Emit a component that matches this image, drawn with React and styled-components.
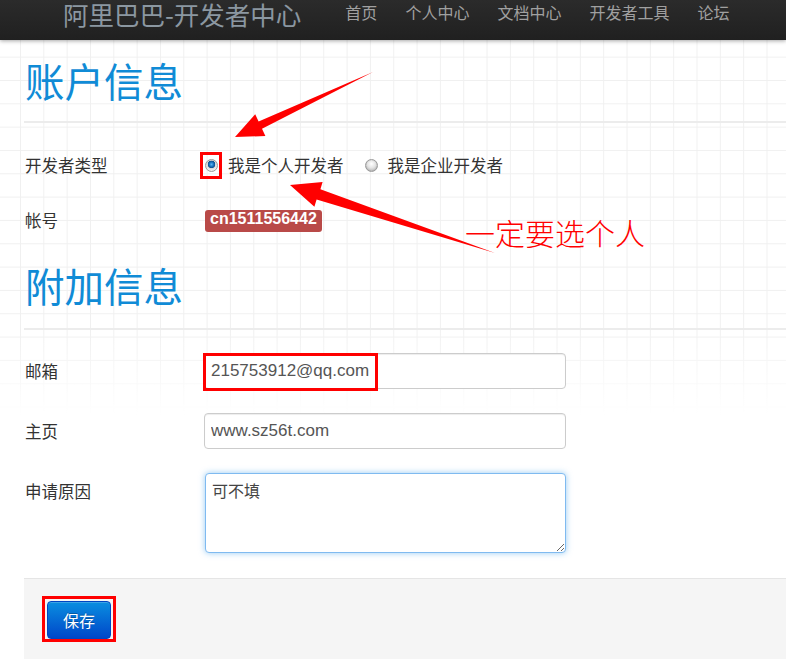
import React from 'react'
import styled, {createGlobalStyle} from 'styled-components'

const GlobalStyle = createGlobalStyle`
  html, body { margin: 0; padding: 0; background: #fff; }
  body { overflow: hidden; font-family: "Noto Sans CJK SC", "Liberation Sans", sans-serif; }
`

const navItems = ['首页', '个人中心', '文档中心', '开发者工具', '论坛']

export default function App() {
  return (
    <Page>
      <GlobalStyle/>
      <Header>
        <Brand>阿里巴巴-开发者中心</Brand>
        <Nav>
          {navItems.map(n => <NavItem key={n}>{n}</NavItem>)}
        </Nav>
      </Header>

      <Main>
        <SectionTitle top={20}>账户信息</SectionTitle>
        <Fields top={24} gap={19}>
          <Row>
            <Label>开发者类型</Label>
            <Radio checked>我是个人开发者</Radio>
            <Radio>我是企业开发者</Radio>
          </Row>
          <Row>
            <Label>帐号</Label>
            <Badge>cn1511556442</Badge>
          </Row>
        </Fields>

        <SectionTitle top={27} bottom={23}>附加信息</SectionTitle>
        <Fields top={23} gap={24}>
          <Row>
            <Label>邮箱</Label>
            <Input defaultValue='215753912@qq.com'/>
          </Row>
          <Row>
            <Label>主页</Label>
            <Input defaultValue='www.sz56t.com'/>
          </Row>
          <Row align='flex-start'>
            <Label pad={6}>申请原因</Label>
            <TextArea defaultValue='可不填'/>
          </Row>
        </Fields>

        <Actions>
          <PrimaryButton>保存</PrimaryButton>
        </Actions>
      </Main>

      <Annotations>
        <Marker x={200} y={152} w={22} h={27}/>
        <Marker x={203} y={353} w={175} h={38}/>
        <Marker x={42} y={596} w={74} h={46}/>
        <Arrows width='786' height='659' viewBox='0 0 786 659'>
          <polygon fill='#ff0000'
            points='373,72 262,128.7 265.4,136 235,137 255.2,114.2 258.6,121.5'/>
          <polygon fill='#ff0000'
            points='495,253 316.6,199.6 314.4,206.7 290,185 322.6,182.1 320.4,189.2'/>
        </Arrows>
        <Note>一定要选个人</Note>
      </Annotations>
    </Page>
  )
}

let Radio = ({checked, children}) => (
  <RadioLabel>
    <RadioDot checked={checked}/>
    {children}
  </RadioLabel>
)


let Page = styled.div`
  position: relative;
  width: 786px;
  height: 659px;
  overflow: hidden;
  background-color: #fff;
  background-image:
    linear-gradient(to bottom, rgba(255,255,255,0) 330px, #fff 415px),
    linear-gradient(#f0f0f0 1px, transparent 1px),
    linear-gradient(90deg, #f0f0f0 1px, transparent 1px);
  background-size: 100% 100%, 23.33px 23.33px, 23.33px 23.33px;
  background-position: 0 0, 0 10px, 20px 0;
`

let Header = styled.div`
  height: 40px;
  display: flex;
  align-items: flex-start;
  padding-left: 63px;
  background: linear-gradient(#2b2b2b, #202020);
  box-shadow: 0 1px 4px rgba(0,0,0,.35);
`

let Brand = styled.div`
  font-size: 25.5px;
  line-height: 28px;
  color: #8b97a1;
  margin-right: 30px;
  white-space: nowrap;
`

let Nav = styled.div`
  display: flex;
`

let NavItem = styled.div`
  padding: 0 14px;
  font-size: 16px;
  line-height: 25px;
  color: #a0a0a0;
  white-space: nowrap;
`

let Main = styled.div`
  padding-left: 24px;
`

let SectionTitle = styled.h1`
  margin: ${p => p.top}px 0 0;
  padding: 0 0 ${p => p.bottom || 21}px 1px;
  font-size: 39.5px;
  line-height: 40px;
  font-weight: 400;
  color: #108bd6;
  border-bottom: 2px solid #ececec;
`

let Fields = styled.div`
  margin-top: ${p => p.top}px;
  display: flex;
  flex-direction: column;
  gap: ${p => p.gap}px;
`

let Row = styled.div`
  display: flex;
  align-items: ${p => p.align || 'center'};
  min-height: 36px;
`

let Label = styled.div`
  width: 179px;
  padding-left: 1px;
  padding-top: ${p => p.pad || 0}px;
  font-size: 16.5px;
  color: #333;
  flex-shrink: 0;
`

let RadioLabel = styled.label`
  display: inline-flex;
  align-items: center;
  font-size: 16.5px;
  color: #333;
  margin-right: 20px;
`

let RadioDot = styled.span`
  width: 13px;
  height: 13px;
  margin: 0 10px 0 1px;
  border-radius: 50%;
  box-sizing: border-box;
  border: 1px solid #9a9a9a;
  background: ${p => p.checked
    ? 'radial-gradient(circle at 50% 40%, #5fb8f0 0, #1b78c4 2px, #0b4f8c 3.5px, #d8d8d8 4px, #f4f4f4 6px)'
    : 'radial-gradient(circle at 50% 35%, #ffffff 0, #e4e4e4 4px, #bdbdbd 7px)'};
  box-shadow: inset 0 0 1px rgba(0,0,0,.2);
`

let Badge = styled.span`
  display: inline-block;
  padding: 0 5px;
  height: 22px;
  line-height: 22px;
  margin: 1px 0 0 1px;
  border-radius: 3px;
  background: #b94a48;
  color: #fff;
  font: bold 16px "Liberation Sans", Arial, sans-serif;
`

let Input = styled.input`
  box-sizing: border-box;
  width: 362px;
  height: 36px;
  padding: 0 6px;
  border: 1px solid #cccccc;
  border-radius: 4px;
  background: #fff;
  box-shadow: inset 0 1px 1px rgba(0,0,0,.075);
  font: 17px "Liberation Sans", Arial, sans-serif;
  color: #555;
  outline: none;
`

let TextArea = styled.textarea`
  box-sizing: border-box;
  width: 361px;
  height: 80px;
  margin-left: 1px;
  padding: 5px 6px;
  border: 1px solid #7fbaf0;
  border-radius: 4px;
  box-shadow: 0 0 6px rgba(82,168,236,.6);
  font: 16px "Noto Sans CJK SC", "Liberation Sans", sans-serif;
  line-height: 22px;
  color: #444;
  outline: none;
`

let Actions = styled.div`
  margin-top: 25px;
  height: 120px;
  padding: 22px 0 0 23px;
  background: #f5f5f5;
  border-top: 1px solid #e5e5e5;
`

let PrimaryButton = styled.button`
  width: 64px;
  height: 38px;
  border-radius: 4px;
  border: 1px solid #0045c2;
  background: linear-gradient(#0a8ee0, #0047c9);
  color: #fff;
  font: 16px "Noto Sans CJK SC", sans-serif;
  text-shadow: 0 -1px 0 rgba(0,0,0,.25);
  box-shadow: inset 0 1px 0 rgba(255,255,255,.2);
  padding: 0;
`

let Annotations = styled.div`
  position: absolute;
  inset: 0;
  pointer-events: none;
`

let Marker = styled.div`
  position: absolute;
  left: ${p => p.x}px;
  top: ${p => p.y}px;
  width: ${p => p.w}px;
  height: ${p => p.h}px;
  box-sizing: border-box;
  border: 3px solid #ff0000;
`

let Arrows = styled.svg`
  position: absolute;
  left: 0;
  top: 0;
`

let Note = styled.div`
  position: absolute;
  left: 465px;
  top: 212px;
  font-size: 30px;
  line-height: 40px;
  font-weight: 300;
  color: #ff0000;
  white-space: nowrap;
`
